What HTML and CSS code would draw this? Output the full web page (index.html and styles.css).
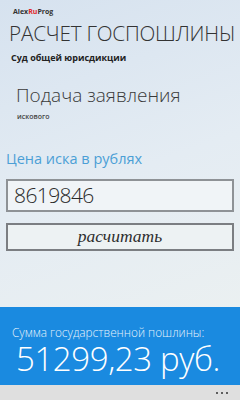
FILE: index.html
```html
<!DOCTYPE html>
<html lang="ru">
<head>
<meta charset="utf-8">
<link rel="stylesheet" href="styles.css">
</head>
<body>
<div class="screen">
  <main class="content">
    <div class="brand">Alex<span class="ru">Ru</span>Prog</div>
    <h1 class="title">РАСЧЕТ ГОСПОШЛИНЫ</h1>
    <div class="subtitle">Суд общей юрисдикции</div>
    <div class="page">
      <div class="page-title">Подача заявления</div>
      <div class="page-sub">искового</div>
    </div>
    <div class="label">Цена иска в рублях</div>
    <div class="input">8619846</div>
    <div class="button">расчитать</div>
  </main>
  <section class="result">
    <div class="result-label">Сумма государственной пошлины:</div>
    <div class="result-value">51299,23 руб.</div>
  </section>
  <footer class="appbar">
    <span class="dot"></span><span class="dot"></span><span class="dot"></span>
  </footer>
</div>
</body>
</html>
```
FILE: styles.css
```css
html, body {
  margin: 0;
  padding: 0;
}
body {
  width: 240px;
  height: 400px;
  overflow: hidden;
  font-family: "Open Sans", "Noto Sans", sans-serif;
}
.screen {
  width: 240px;
  height: 400px;
  display: flex;
  flex-direction: column;
  background: linear-gradient(160deg, #d6e2ef 0%, #e4ecf3 45%, #eef2f0 100%);
}
.content {
  flex: 1;
  display: flex;
  flex-direction: column;
}
.brand {
  margin: 6px 0 0 13px;
  font-size: 7px;
  font-weight: 700;
  color: #333;
  line-height: 11px;
}
.ru { color: #e0262a; }
.title {
  margin: 3px 0 0 9px;
  font-size: 20.7px;
  font-weight: 300;
  color: #333;
  line-height: 26px;
  letter-spacing: -0.2px;
  white-space: nowrap;
}
.subtitle {
  margin: 5px 0 0 11px;
  font-size: 9px;
  font-weight: 700;
  color: #222;
  line-height: 14px;
}
.page {
  margin: 18px 0 0 16px;
}
.page-title {
  font-size: 19px;
  font-weight: 300;
  color: #3a3a3a;
  line-height: 24px;
}
.page-sub {
  margin: 5px 0 0 1px;
  font-size: 7px;
  font-weight: 600;
  color: #444;
  line-height: 10px;
}
.label {
  margin: 27px 0 0 6px;
  font-size: 14.5px;
  font-weight: 400;
  color: #4b9fd6;
  line-height: 20px;
}
.input {
  margin: 10px 6px 0 6px;
  height: 29px;
  border: 2px solid #8e9296;
  background: #f0f4f7;
  padding-left: 6px;
  font-size: 21px;
  font-weight: 300;
  line-height: 29px;
  color: #2a2a2a;
  letter-spacing: -0.6px;
}
.button {
  margin: 11px 6px 0 6px;
  height: 24px;
  border: 2px solid #7b7e82;
  background: #edf2f3;
  text-align: center;
  font-family: "Liberation Serif", "DejaVu Serif", serif;
  font-style: italic;
  font-size: 17.5px;
  line-height: 23px;
  color: #2e2e2e;
}
.result {
  height: 78px;
  background: #1a8ae0;
  color: #fff;
  display: flex;
  flex-direction: column;
}
.result-label {
  margin: 18px 0 0 12px;
  font-size: 11.8px;
  font-weight: 300;
  line-height: 14px;
  color: #e6f2fb;
  white-space: nowrap;
}
.result-value {
  margin: 3px 0 0 16px;
  font-size: 33px;
  font-weight: 300;
  line-height: 34px;
  letter-spacing: -0.4px;
  white-space: nowrap;
}
.appbar {
  height: 15px;
  background: #dfdfdf;
  display: flex;
  justify-content: flex-end;
  align-items: center;
  gap: 3px;
  padding-right: 12px;
}
.dot {
  width: 2px;
  height: 2px;
  border-radius: 50%;
  background: #333;
}
```
